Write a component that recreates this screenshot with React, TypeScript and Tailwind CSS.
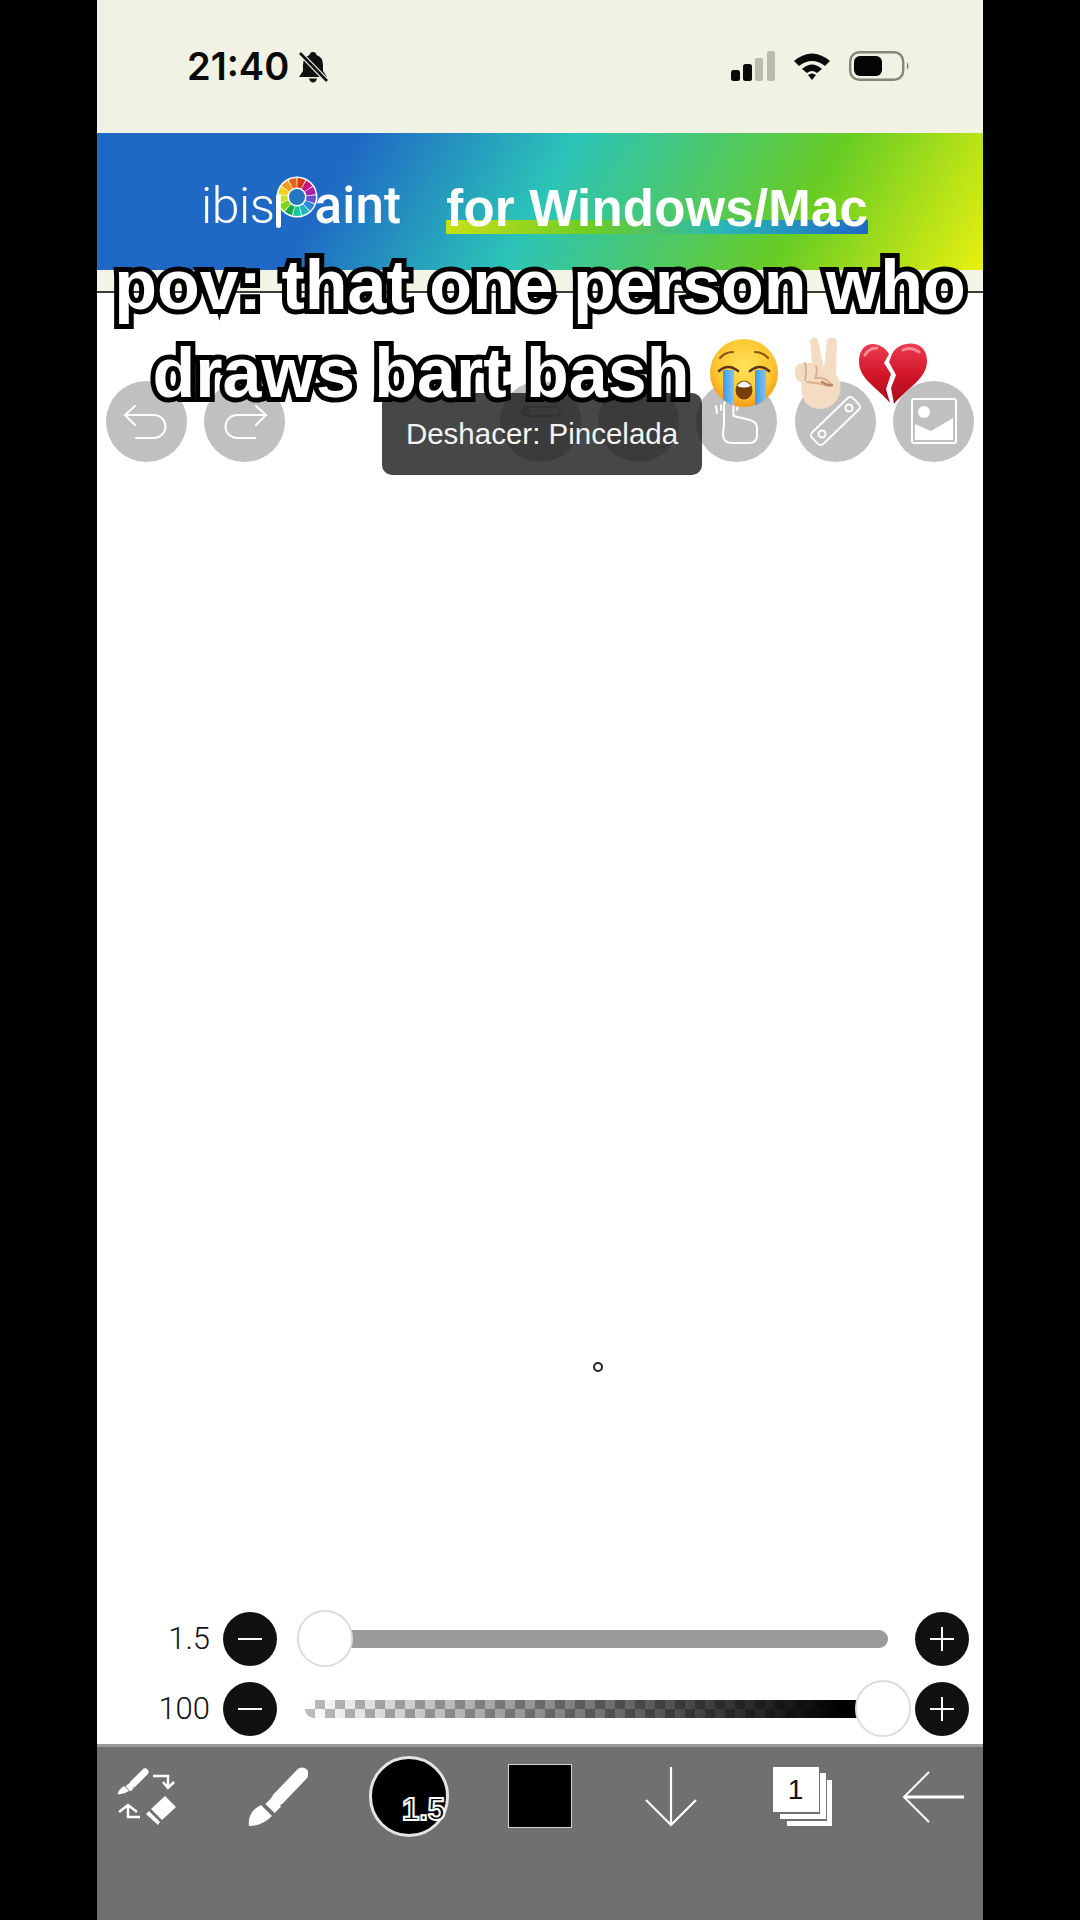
import React from "react";

function Wheel() {
  const colors = ["#d8361a", "#c9147e", "#a81fb0", "#6a4fd0", "#2f86d8", "#1cb4c4", "#18c49a", "#1fa84a", "#7ed321", "#c8e02c", "#f2d21e", "#ee9a1e", "#e8641a"];
  const n = colors.length;
  const cx = 21, cy = 21, R = 19, r = 9.5;
  return (
    <svg width="42" height="42" viewBox="0 0 42 42" className="absolute left-0 top-0">
      <circle cx={cx} cy={cy} r={20.5} fill="#fff" />
      {colors.map((c, i) => {
        const a0 = ((i / n) * 360 - 90 + 1.5) * (Math.PI / 180);
        const a1 = (((i + 1) / n) * 360 - 90 - 1.5) * (Math.PI / 180);
        const d = `M${cx + r * Math.cos(a0)} ${cy + r * Math.sin(a0)} L${cx + R * Math.cos(a0)} ${cy + R * Math.sin(a0)} A${R} ${R} 0 0 1 ${cx + R * Math.cos(a1)} ${cy + R * Math.sin(a1)} L${cx + r * Math.cos(a1)} ${cy + r * Math.sin(a1)} A${r} ${r} 0 0 0 ${cx + r * Math.cos(a0)} ${cy + r * Math.sin(a0)} Z`;
        return <path key={i} d={d} fill={c} />;
      })}
      <circle cx={cx} cy={cy} r={8} fill="#2378c0" />
    </svg>
  );
}

function CryEmoji() {
  return (
    <svg width="70" height="68" viewBox="0 0 68 68" className="shrink-0">
      <defs>
        <radialGradient id="cryFace" cx="50%" cy="40%" r="60%">
          <stop offset="0%" stopColor="#ffe25a" />
          <stop offset="70%" stopColor="#fdc52f" />
          <stop offset="100%" stopColor="#f59a1a" />
        </radialGradient>
        <linearGradient id="tear" x1="0" x2="1" y1="0" y2="0">
          <stop offset="0%" stopColor="#3f9ae6" />
          <stop offset="100%" stopColor="#7cc4f4" />
        </linearGradient>
        <clipPath id="faceClip"><circle cx="34" cy="34" r="34" /></clipPath>
      </defs>
      <circle cx="34" cy="34" r="34" fill="url(#cryFace)" />
      <g clipPath="url(#faceClip)">
        <rect x="13" y="31" width="11" height="38" fill="url(#tear)" />
        <rect x="45" y="31" width="11" height="38" fill="url(#tear)" />
      </g>
      <path d="M9 32 Q18 24 28 32" fill="none" stroke="#5a3310" strokeWidth="2.6" strokeLinecap="round" />
      <path d="M40 32 Q50 24 59 32" fill="none" stroke="#5a3310" strokeWidth="2.6" strokeLinecap="round" />
      <path d="M10 19 Q15 13 23 13" fill="none" stroke="#8a5416" strokeWidth="2.2" strokeLinecap="round" />
      <path d="M58 19 Q53 13 45 13" fill="none" stroke="#8a5416" strokeWidth="2.2" strokeLinecap="round" />
      <ellipse cx="34" cy="51" rx="8.5" ry="9.5" fill="#7a3f08" />
      <path d="M27 47 Q34 38 41 47 Q34 50 27 47" fill="#fff" />
    </svg>
  );
}

function PeaceEmoji() {
  return (
    <svg width="48" height="74" viewBox="0 0 48 74" className="shrink-0">
      <path d="M15 4 Q20 -1 23 4 L29 32 L32 4 Q37 -1 42 4 L41 38 Q48 48 44 60 Q38 73 24 73 Q10 72 7 58 L6 46 Q-1 45 0 33 Q2 26 10 27 L17 27 Z" fill="#f4dcc2" />
      <path d="M10 27 Q12 36 10 44 M21 30 Q23 36 20 42 M20 42 Q30 40 37 49 Q34 51 27 48 Q20 47 12 46" fill="none" stroke="#d9b08f" strokeWidth="2" strokeLinecap="round" />
      <path d="M27 46 Q33 50 37 49" fill="none" stroke="#b98a68" strokeWidth="2.4" strokeLinecap="round" />
    </svg>
  );
}

function HeartEmoji() {
  return (
    <svg width="68" height="64" viewBox="0 0 68 64" className="shrink-0">
      <defs>
        <linearGradient id="hrt" x1="0" x2="0" y1="0" y2="1">
          <stop offset="0%" stopColor="#ee3b50" />
          <stop offset="55%" stopColor="#d01427" />
          <stop offset="100%" stopColor="#a80d1c" />
        </linearGradient>
      </defs>
      <path d="M30 13 C22 -1 0 -2 0 21 C0 38 19 47 31 62 L27 48 L32 33 L25 22 Z" fill="url(#hrt)" />
      <path d="M33 13 C40 -1 68 -3 68 20 C68 38 48 47 35 63 L32 47 L37 34 L30 21 Z" fill="url(#hrt)" />
      <path d="M6 14 Q10 7 18 7 M44 9 Q52 5 60 11" fill="none" stroke="#f98a92" strokeWidth="3" strokeLinecap="round" />
    </svg>
  );
}

function ToolCircle({ children, hidden }: { children?: React.ReactNode; hidden?: boolean }) {
  return (
    <div className={hidden ? "h-[81px] w-[81px] shrink-0" : "flex h-[81px] w-[81px] shrink-0 items-center justify-center rounded-full bg-[#c0c0c0]"}>
      {children}
    </div>
  );
}

const iconProps = { width: 81, height: 81, viewBox: "0 0 81 81", fill: "none", stroke: "#fff", strokeWidth: 2, strokeLinecap: "round" as const, strokeLinejoin: "round" as const };

function RoundBtn({ plus }: { plus?: boolean }) {
  return (
    <div className="relative flex h-[54px] w-[54px] shrink-0 items-center justify-center rounded-full bg-[#111111]">
      <div className="h-[2px] w-[24px] bg-white" />
      {plus && <div className="absolute h-[24px] w-[2px] bg-white" />}
    </div>
  );
}

function Thumb({ className }: { className: string }) {
  return <div className={`absolute top-0 h-[57px] w-[56px] rounded-full border-2 border-[#dcdcdc] bg-white ${className}`} />;
}

export default function App() {
  return (
    <div className="flex h-[1920px] w-[1080px] justify-center overflow-hidden bg-black font-['Liberation_Sans',sans-serif]">
      <main className="relative flex w-[886px] flex-col">
        {/* status bar */}
        <div className="flex h-[133px] shrink-0 items-start bg-[#f2f2e4] pl-[90px] pr-[72px] pt-[46px]">
          <span className="font-['Inter',sans-serif] text-[38px] font-semibold leading-[40px] text-[#0a0a0a]">21:40</span>
          <svg width="32" height="32" viewBox="0 0 32 32" className="ml-[8px] mt-[5px]">
            <path d="M16 1 Q19 1 19.5 4 Q26 6 26 14 L26 20 L30 26 L2 26 L6 20 L6 14 Q6 6 12.5 4 Q13 1 16 1 Z M12 27.5 H20 Q19 31.5 16 31.5 Q13 31.5 12 27.5 Z" fill="#111" />
            <path d="M3 2 L30 30" stroke="#f2f2e4" strokeWidth="5" />
            <path d="M3 2 L30 30" stroke="#111" strokeWidth="2.6" />
          </svg>
          <div className="ml-auto flex items-start">
            <svg width="44" height="30" viewBox="0 0 44 30" className="mt-[5px]">
              <rect x="0" y="19" width="9" height="11" rx="2.5" fill="#0a0a0a" />
              <rect x="12" y="13" width="9" height="17" rx="2.5" fill="#0a0a0a" />
              <rect x="24" y="7" width="8" height="23" rx="2" fill="#bcbcae" />
              <rect x="36" y="0" width="8" height="30" rx="2" fill="#bcbcae" />
            </svg>
            <svg width="38" height="30" viewBox="0 0 38 28" className="ml-[18px] mt-[5px]">
              <path d="M1 9 Q19 -6 37 9 L32 14 Q19 4 6 14 Z M9 17 Q19 8 29 17 L24 21 Q19 17 14 21 Z" fill="#0a0a0a" />
              <path d="M15 23 Q19 20 23 23 L19 28 Z" fill="#0a0a0a" />
            </svg>
            <svg width="62" height="30" viewBox="0 0 62 30" className="ml-[18px] mt-[5px]">
              <rect x="1.2" y="1.2" width="53" height="27.6" rx="9" fill="none" stroke="#86867a" strokeWidth="2.4" />
              <rect x="5" y="5" width="28" height="20" rx="6" fill="#050505" />
              <path d="M58 11 Q61 15 58 19 Z" fill="#7c7c70" />
            </svg>
          </div>
        </div>

        {/* banner */}
        <div className="flex h-[137px] shrink-0 items-start bg-[linear-gradient(120deg,#1f68c4_0%,#1f68c4_27%,#2bc4b8_50%,#68cc24_78%,#e8f010_100%)] pl-[104px] pt-[43px] text-white">
          <span className="font-['Roboto',sans-serif] text-[50px] font-light leading-[60px] tracking-[-0.5px]">ibis</span>
          <span className="relative ml-[1px] h-[60px] w-[42px] shrink-0">
            <Wheel />
            <span className="absolute bottom-[8px] left-[0px] block h-[34px] w-[5px] rounded-full bg-white" />
          </span>
          <span className="ml-[-3px] font-['Roboto',sans-serif] text-[51px] font-medium leading-[60px] tracking-[0.2px]">aint</span>
          <span className="relative isolate ml-[45px] mt-[3px] whitespace-nowrap text-[51px] font-bold leading-[60px] tracking-[0.2px]">
            <span className="absolute bottom-[5px] left-0 right-0 z-[-1] h-[14px] bg-[linear-gradient(90deg,#c8e018,#6ccc24_35%,#2bb8b8_65%,#1f68c4)]" />
            for Windows/Mac
          </span>
        </div>

        {/* strip below the banner */}
        <div className="h-[23px] shrink-0 border-b-2 border-[#3c3c3c] bg-[#f3f3e6]" />

        {/* canvas */}
        <div className="relative flex-1 bg-white pt-[88px]">
          <div className="flex justify-between px-[9px]">
            <ToolCircle>
              <svg {...iconProps}>
                <path d="M19 34 H48 A11.5 11.5 0 0 1 48 57 H30" />
                <path d="M29 25 L19 34 L29 44" />
              </svg>
            </ToolCircle>
            <ToolCircle>
              <svg {...iconProps}>
                <path d="M62 34 H33 A11.5 11.5 0 0 0 33 57 H51" />
                <path d="M52 25 L62 34 L52 44" />
              </svg>
            </ToolCircle>
            <ToolCircle hidden />
            <ToolCircle hidden />
            <ToolCircle>
              <svg {...iconProps} stroke="#8a8a8a" strokeWidth={1.5}>
                <rect x="22" y="26" width="38" height="9" rx="4" />
                <circle cx="27" cy="30.5" r="2.5" />
              </svg>
            </ToolCircle>
            <ToolCircle />
            <ToolCircle>
              <svg {...iconProps}>
                <path d="M28 44 V24 a4.7 4.7 0 0 1 9.4 0 V35 L54 39 Q61 41 61 47 V54 Q61 62 53 62 H36 Q27 62 27 53 Z" />
                <path d="M20 25 l1 7 M25 24 l0 5 M42 24 l-1 5" />
              </svg>
            </ToolCircle>
            <ToolCircle>
              <svg {...iconProps}>
                <rect x="12" y="32" width="57" height="16" rx="4" transform="rotate(-44 40.5 40)" />
                <circle cx="27" cy="53" r="3.5" />
                <circle cx="54" cy="27" r="3.5" />
              </svg>
            </ToolCircle>
            <ToolCircle>
              <svg {...iconProps}>
                <rect x="19" y="18" width="44" height="44" rx="2" />
                <circle cx="31" cy="31" r="6" fill="#fff" stroke="none" />
                <path d="M22 43 L38 50 L60 37 V59 H22 Z" fill="#fff" stroke="none" />
              </svg>
            </ToolCircle>
          </div>

          {/* toast */}
          <div className="absolute left-[285px] top-[100px] flex h-[82px] w-[320px] items-center justify-center rounded-[10px] bg-[rgba(25,25,25,0.8)] text-[29.5px] text-[#f4f4f4]">
            Deshacer: Pincelada
          </div>

          {/* brush cursor */}
          <div className="absolute left-[496px] top-[1069px] h-[10px] w-[10px] rounded-full border-2 border-[#222]" />
        </div>

        {/* sliders */}
        <div className="flex shrink-0 flex-col gap-[13px] bg-white pb-[7px] pr-[14px]">
          <div className="flex h-[57px] items-center">
            <span className="w-[113px] text-right font-['Roboto',sans-serif] text-[31px] font-light leading-none text-[#111]">1.5</span>
            <div className="ml-[13px]"><RoundBtn /></div>
            <div className="relative flex h-[57px] flex-1 items-center pl-[63px] pr-[27px]">
              <div className="h-[18px] w-full rounded-r-full bg-[#9a9a9a]" />
              <Thumb className="left-[20px]" />
            </div>
            <RoundBtn plus />
          </div>
          <div className="flex h-[57px] items-center">
            <span className="w-[113px] text-right font-['Roboto',sans-serif] text-[31px] font-light leading-none text-[#111]">100</span>
            <div className="ml-[13px]"><RoundBtn /></div>
            <div className="relative flex h-[57px] flex-1 items-center pl-[28px] pr-[50px]">
              <div className="h-[18px] w-full rounded-l-full bg-[linear-gradient(to_right,rgba(0,0,0,0),#000_96%),repeating-conic-gradient(#bcbcbc_0_25%,#ffffff_0_50%)] bg-[length:100%_100%,20px_18px]" />
              <Thumb className="left-[578px]" />
            </div>
            <RoundBtn plus />
          </div>
        </div>

        {/* bottom bar */}
        <div className="flex h-[176px] shrink-0 items-start justify-between border-t-[3px] border-[#9a9a9a] bg-[#707070] px-[10px] pt-[9px]">
          <div className="flex h-[81px] w-[80px] items-start justify-center pt-[11px]">
            <svg width="60" height="60" viewBox="0 0 60 60" fill="none">
              <path d="M28 5 L16 17" stroke="#fff" strokeWidth="7" strokeLinecap="round" />
              <path d="M14 19 L11 22" stroke="#fff" strokeWidth="7" />
              <path d="M7 19 L12 24 Q6 28 0.5 27 Q2 22 7 19 Z" fill="#fff" />
              <path d="M48 29 L59 40 L45 53 L34 42 Z M32 44 L43 55 L41 58 L29 47 Z" fill="#fff" />
              <path d="M36 9 H51 V20 M46 15 L51 21 L57 15" stroke="#fff" strokeWidth="2.5" />
              <path d="M11 39 V50 H23 M2 45 L11 38 L20 45" stroke="#fff" strokeWidth="2.5" />
            </svg>
          </div>
          <div className="flex h-[81px] w-[80px] items-start justify-center pt-[11px]">
            <svg width="60" height="60" viewBox="0 0 60 60" fill="#fff">
              <path d="M54 7 L30 32" stroke="#fff" strokeWidth="13" strokeLinecap="round" />
              <path d="M28.5 35 L22 41.5" stroke="#fff" strokeWidth="13" />
              <path d="M13 38 L24 49 Q14 59 1 59 Q-1 45 13 38 Z" />
            </svg>
          </div>
          <div className="relative h-[81px] w-[80px] rounded-full border-[3px] border-[#e4e4e4] bg-black">
            <span className="absolute bottom-[9px] right-[1px] text-[31px] font-bold leading-none text-black [-webkit-text-stroke:2px_#fff]">1.5</span>
          </div>
          <div className="flex h-[81px] w-[80px] items-start justify-center pt-[8px]">
            <div className="h-[64px] w-[64px] border border-[#cfcfcf] bg-black" />
          </div>
          <div className="flex h-[81px] w-[80px] items-start justify-center pt-[11px]">
            <svg width="54" height="60" viewBox="0 0 54 60" fill="none" stroke="#fff" strokeWidth="2.2">
              <path d="M27 0 V58" />
              <path d="M2 33 L27 58 L52 33" />
            </svg>
          </div>
          <div className="flex h-[81px] w-[80px] items-start justify-center pt-[11px]">
            <div className="relative h-[59px] w-[59px]">
              <svg width="59" height="59" viewBox="0 0 59 59" fill="#fff" className="absolute left-0 top-0">
                <path d="M47 6 H53 V52 H7 V47 H47 Z" />
                <path d="M54 13 H59 V59 H14 V54 H54 Z" />
              </svg>
              <div className="absolute left-0 top-0 flex h-[45px] w-[46px] items-center justify-center bg-white text-[28px] leading-none text-[#111]">1</div>
            </div>
          </div>
          <div className="flex h-[81px] w-[80px] items-start justify-center pt-[15px]">
            <svg width="62" height="52" viewBox="0 0 62 52" fill="none" stroke="#fff">
              <path d="M62 26 H2" strokeWidth="3" />
              <path d="M27 1 L2 26 L27 51" strokeWidth="2" />
            </svg>
          </div>
        </div>

        {/* caption */}
        <div className="absolute left-0 right-0 top-[241px] flex flex-col items-center text-[70px] font-bold leading-[88px] text-white">
          <span className="whitespace-nowrap [-webkit-text-stroke:10px_#000] [paint-order:stroke_fill]">pov: that one person who</span>
          <div className="flex items-center">
            <span className="whitespace-nowrap [-webkit-text-stroke:10px_#000] [paint-order:stroke_fill]">draws bart bash</span>
            <span className="ml-[20px] flex items-center gap-[16px]">
              <CryEmoji />
              <PeaceEmoji />
              <HeartEmoji />
            </span>
          </div>
        </div>
      </main>
    </div>
  );
}
